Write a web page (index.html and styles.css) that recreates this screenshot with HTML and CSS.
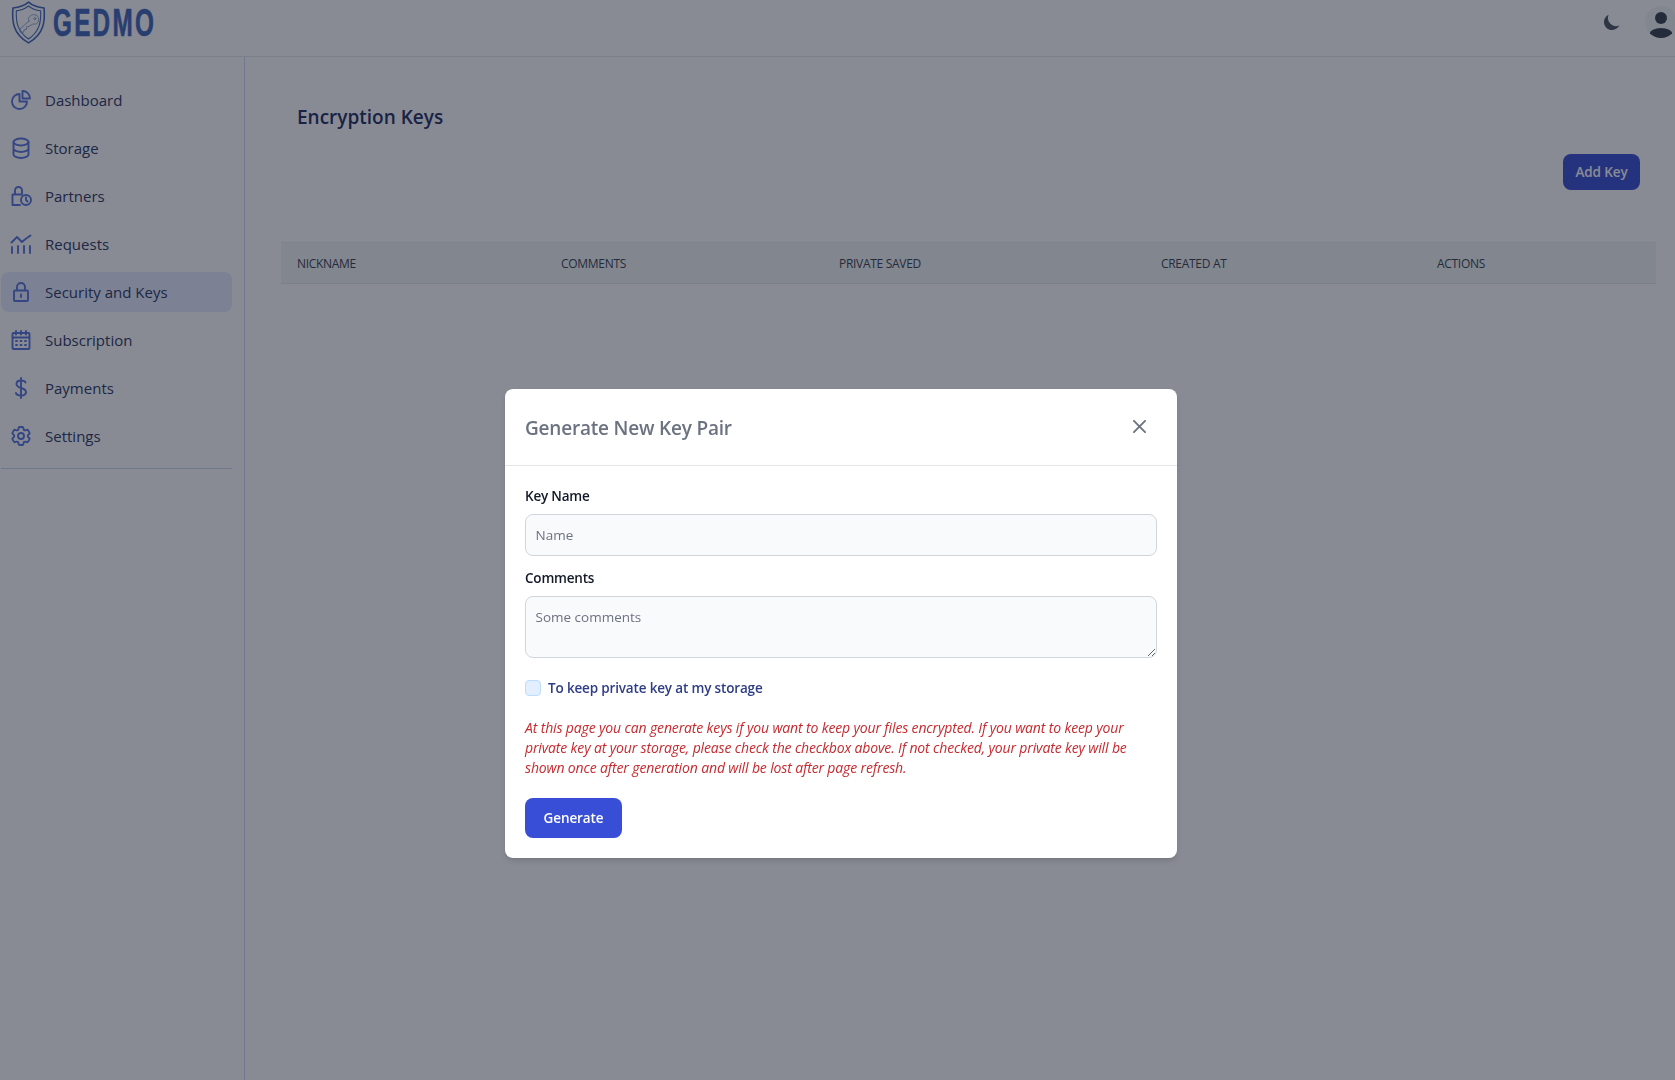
FILE: index.html
```html
<!DOCTYPE html>
<html lang="en">
<head>
<meta charset="utf-8">
<title>Encryption Keys</title>
<link rel="stylesheet" href="styles.css">
</head>
<body>
<header class="topbar">
  <div class="brand">
    <svg class="shield" viewBox="0 0 36 44" fill="none" stroke-linejoin="round" stroke-linecap="round">
      <path class="shield-outer" d="M18 1 C14 4.500 8 6.500 2 7 C1 19 1 33 18 43 C35 33 35 19 34 7 C28 6.500 22 4.500 18 1Z"/>
      <path class="shield-inner" d="M18 5 C15 7.500 10 9.500 5.500 10 C5 20 6 31 18 39 C30 31 31 20 30.500 10 C26 9.500 21 7.500 18 5Z"/>
      <path class="shield-key" d="M18.500 20.500 L9 29 L9.500 32 L13 32 L13.500 29.500 L16 29 L16 26.500 L18.500 26 L22.500 23.500 C26.500 24.500 29 21.500 28.500 18 C28 14.500 24 13 21 14.500 C18 16 17.500 18.500 18.500 20.500Z"/>
      <circle class="shield-key" cx="24.500" cy="18" r="1.100"/>
    </svg>
    <span class="wordmark">GEDMO</span>
  </div>
  <div class="top-actions">
    <svg class="moon" viewBox="0 0 20 20"><path d="M17.293 13.293A8 8 0 0 1 6.707 2.707a8.001 8.001 0 1 0 10.586 10.586Z"/></svg>
    <div class="avatar">
      <svg viewBox="0 0 32 32"><circle cx="16" cy="12" r="6"/><ellipse cx="16" cy="28" rx="11.500" ry="6"/></svg>
    </div>
  </div>
</header>
<div class="shell">
  <aside class="sidebar">
    <nav class="nav">
      <a class="nav-item"><svg class="icon" viewBox="0 0 24 24"><path d="M10.500 6a7.500 7.500 0 1 0 7.500 7.500h-7.500V6Z"/><path d="M13.500 10.500H21A7.500 7.500 0 0 0 13.500 3v7.500Z"/></svg><span>Dashboard</span></a>
      <a class="nav-item"><svg class="icon" viewBox="0 0 24 24"><ellipse cx="12" cy="6" rx="7.500" ry="3.500"/><path d="M4.500 6v12.500c0 1.900 3.400 3.500 7.500 3.500s7.500-1.600 7.500-3.500V6M4.500 12.500c0 1.900 3.400 3.500 7.500 3.500s7.500-1.600 7.500-3.500"/></svg><span>Storage</span></a>
      <a class="nav-item"><svg class="icon" viewBox="0 0 24 24"><path d="M6 10.500V6.500a3.500 3.500 0 0 1 7 0v3M13 10.500H3.500v10.500H11"/><circle cx="17" cy="16" r="5"/><path d="M17 13.500V16l1.500 1.500"/></svg><span>Partners</span></a>
      <a class="nav-item"><svg class="icon" viewBox="0 0 24 24"><path d="M2.500 10.500L8 5l5 5 3.500-3 5-3.500M3 21v-6M9 21v-7M15 21v-7M21 21v-7"/></svg><span>Requests</span></a>
      <a class="nav-item is-active"><svg class="icon" viewBox="0 0 24 24"><path d="M8 10V7a4 4 0 0 1 8 0v3M6 10.500h12a1 1 0 0 1 1 1V20a1 1 0 0 1-1 1H6a1 1 0 0 1-1-1v-8.500a1 1 0 0 1 1-1Z"/><path d="M12 14.500v2.500"/></svg><span>Security and Keys</span></a>
      <a class="nav-item"><svg class="icon" viewBox="0 0 24 24"><path d="M7 3v3.500M12 3v3.500M17 3v3.500M3.500 9.500h17M4.500 5h15a1 1 0 0 1 1 1v14a1 1 0 0 1-1 1h-15a1 1 0 0 1-1-1V6a1 1 0 0 1 1-1Z"/><path d="M7 13h1M11.500 13h1M16 13h1M7 17h1M11.500 17h1M16 17h1"/></svg><span>Subscription</span></a>
      <a class="nav-item"><svg class="icon" viewBox="0 0 24 24"><path d="M12 2v20M16.500 6.500C16 5 14.500 4.500 12 4.500 9 4.500 7.500 6 7.500 8c0 5 9.500 3 9.500 8 0 2.200-2 3.500-5 3.500-2.500 0-4.500-.5-5-2.500"/></svg><span>Payments</span></a>
      <a class="nav-item"><svg class="icon" viewBox="0 0 24 24"><path d="M9.594 3.940c.090-.542.560-.940 1.110-.940h2.593c.550 0 1.020.398 1.110.940l.213 1.281c.063.374.313.686.645.870.074.040.147.083.220.127.325.196.720.257 1.075.124l1.217-.456a1.125 1.125 0 0 1 1.370.490l1.296 2.247a1.125 1.125 0 0 1-.260 1.431l-1.003.827c-.293.241-.438.613-.430.992a7.723 7.723 0 0 1 0 .255c-.008.378.137.750.430.991l1.004.827c.424.350.534.955.260 1.430l-1.298 2.247a1.125 1.125 0 0 1-1.369.491l-1.217-.456c-.355-.133-.750-.072-1.076.124a6.470 6.470 0 0 1-.220.128c-.331.183-.581.495-.644.869l-.213 1.281c-.090.543-.560.940-1.110.940h-2.594c-.550 0-1.019-.398-1.110-.940l-.213-1.281c-.062-.374-.312-.686-.644-.870a6.520 6.520 0 0 1-.220-.127c-.325-.196-.720-.257-1.076-.124l-1.217.456a1.125 1.125 0 0 1-1.369-.490l-1.297-2.247a1.125 1.125 0 0 1 .260-1.431l1.004-.827c.292-.240.437-.613.430-.991a6.932 6.932 0 0 1 0-.255c.007-.380-.138-.751-.430-.992l-1.004-.827a1.125 1.125 0 0 1-.260-1.430l1.297-2.247a1.125 1.125 0 0 1 1.370-.491l1.216.456c.356.133.751.072 1.076-.124.072-.044.146-.086.220-.128.332-.183.582-.495.644-.869l.214-1.280Z"/><circle cx="12" cy="12" r="3"/></svg><span>Settings</span></a>
    </nav>
  </aside>
  <main class="main">
    <h1 class="page-title">Encryption Keys</h1>
    <div class="toolbar"><button class="btn btn-primary btn-sm">Add Key</button></div>
    <div class="table-head">
      <span class="col col-nick">Nickname</span>
      <span class="col col-comments">Comments</span>
      <span class="col col-private">Private saved</span>
      <span class="col col-created">Created at</span>
      <span class="col col-actions">Actions</span>
    </div>
  </main>
</div>
<div class="overlay">
  <section class="modal">
    <div class="modal-head">
      <h2 class="modal-title">Generate New Key Pair</h2>
      <svg class="close" viewBox="0 0 14 14"><path d="M1 1l12 12M13 1L1 13"/></svg>
    </div>
    <form class="modal-body">
      <label class="field-label" for="k">Key Name</label>
      <input class="input" id="k" placeholder="Name">
      <label class="field-label field-second" for="c">Comments</label>
      <textarea class="input textarea" id="c" placeholder="Some comments"></textarea>
      <label class="check"><span class="check-box"></span><span>To keep private key at my storage</span></label>
      <p class="note">At this page you can generate keys if you want to keep your files encrypted. If you want to keep your private key at your storage, please check the checkbox above. If not checked, your private key will be shown once after generation and will be lost after page refresh.</p>
      <button class="btn btn-primary btn-lg" type="button">Generate</button>
    </form>
  </section>
</div>
</body>
</html>
```
FILE: styles.css
```css
* { box-sizing: border-box; }
html, body { margin: 0; height: 100%; }
body {
  background: #fff;
  font-family: "Open Sans", "Noto Sans", sans-serif;
  color: #111827;
  overflow: hidden;
}
.topbar {
  height: 57px;
  border-bottom: 1px solid #e5e7eb;
  display: flex;
  justify-content: space-between;
  padding-left: 11px;
}
.brand { display: flex; align-items: flex-start; gap: 7px; height: 44px; padding-top: 1px; }
.shield { width: 35px; height: 43px; flex: none; }
.shield-outer { stroke: #3f64ba; stroke-width: 1.6; }
.shield-inner { stroke: #3f64ba; stroke-width: 1.1; }
.shield-key { stroke: #7f97d0; stroke-width: .9; }
.wordmark {
  display: inline-block;
  font-family: "Liberation Sans", sans-serif;
  font-weight: 700;
  font-size: 38px;
  line-height: 44px;
  letter-spacing: 3.5px;
  color: #3f64ba;
  -webkit-text-stroke: .6px #3f64ba;
  transform: scaleX(.64);
  transform-origin: left center;
}
.top-actions { display: flex; align-items: flex-start; gap: 23px; margin-right: -2px; padding-top: 6px; }
.moon { width: 20px; height: 20px; margin-top: 6px; fill: #4b5563; }
.avatar { width: 32px; height: 32px; border-radius: 50%; background: #f3f4f6; overflow: hidden; }
.avatar svg { width: 32px; height: 32px; fill: #374151; display: block; }
.shell { display: flex; height: calc(100vh - 57px); }
.sidebar { width: 245px; border-right: 1px solid #cfd9f5; padding: 23px 12px 0 1px; flex: none; }
.nav { display: flex; flex-direction: column; gap: 8px; padding-bottom: 12px; border-bottom: 1px solid #cfd9f5; }
.nav-item {
  display: flex; align-items: center; height: 40px; padding-left: 8px; gap: 12px;
  border-radius: 8px; font-size: 15px; color: #2c3565;
}
.nav-item.is-active { background: #e6edff; }
.icon { width: 24px; height: 24px; fill: none; stroke: #5673e0; stroke-width: 1.900; stroke-linecap: round; stroke-linejoin: round; flex: none; }
.main { flex: 1; min-width: 0; padding: 0 19px 0 36px; }
.page-title { margin: 0; padding: 46px 0 0 16px; font-size: 19px; line-height: 28px; font-weight: 600; color: #232c63; }
.toolbar { display: flex; justify-content: flex-end; padding: 23px 16px 0 0; }
.btn { border: 0; border-radius: 8px; background: #394ed7; color: #fff; font-family: inherit; font-weight: 600; font-size: 13.500px; letter-spacing: -.1px; }
.btn-sm { width: 77px; height: 36px; }
.btn-lg { width: 97px; height: 40px; display: block; }
.table-head {
  margin-top: 52px; height: 42px; background: #f3f4f6; border-top: 1px solid #edeef1;
  border-bottom: 1px solid #e5e7eb; display: flex; align-items: center;
  font-size: 12px; text-transform: uppercase; color: #374151;
}
.col { flex: none; letter-spacing: -.3px; }
.col-nick { width: 280px; padding-left: 16px; }
.col-comments { width: 278px; }
.col-private { width: 322px; }
.col-created { width: 276px; }
.overlay {
  position: fixed; inset: 0; background: rgba(17, 24, 39, .5);
  padding: 389px 498px 0 505px;
}
.modal { width: 672px; height: 469px; background: #fff; border-radius: 8px; box-shadow: 0 4px 6px -1px rgba(0,0,0,.1), 0 2px 4px -2px rgba(0,0,0,.1); }
.modal-head { height: 77px; border-bottom: 1px solid #e5e7eb; display: flex; align-items: center; justify-content: space-between; padding: 0 31px 0 20px; }
.modal-title { margin: 2px 0 0; font-size: 19px; font-weight: 600; color: #6b7280; letter-spacing: -.2px; }
.close { width: 13px; height: 13px; margin-top: -1px; fill: none; stroke: #6b7280; stroke-width: 2; stroke-linecap: round; }
.modal-body { padding: 20px; }
.field-label { display: block; font-size: 13.500px; font-weight: 600; line-height: 21px; color: #111827; margin-bottom: 7px; letter-spacing: -.2px; }
.field-second { margin-top: 12px; }
.input {
  display: block; width: 100%; height: 42px; padding: 10px 9.500px; border: 1px solid #d1d5db; border-radius: 8px;
  background: #f9fafb; font-family: inherit; font-size: 13.500px; line-height: 20px; color: #111827; outline: none;
}
.input::placeholder { color: #6b7280; opacity: 1; font-weight: 500; }
.textarea { height: 62px; }
.check { display: flex; align-items: center; gap: 7px; margin-top: 22px; font-size: 13.500px; font-weight: 600; color: #2f3d87; line-height: 16px; letter-spacing: -.16px; }
.check-box { width: 16px; height: 16px; border: 1px solid #bfdbfe; border-radius: 4px; background: #e1efff; flex: none; }
.note { margin: 22px 0 0; font-size: 14px; font-style: italic; line-height: 20px; color: #c62a2f; letter-spacing: -.14px; }
.btn-lg { margin-top: 20px; }
```
